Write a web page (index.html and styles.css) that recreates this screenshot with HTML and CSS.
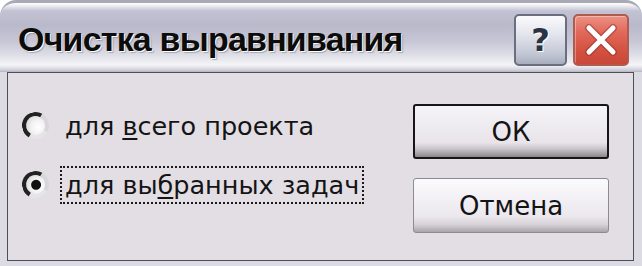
FILE: index.html
```html
<!DOCTYPE html>
<html lang="ru">
<head>
<meta charset="utf-8">
<title>Очистка выравнивания</title>
<link rel="stylesheet" href="styles.css">
</head>
<body>
<div class="window">
  <div class="titlebar">
    <span class="title">Очистка выравнивания</span>
    <div class="tbtns">
      <div class="tbtn help">?</div>
      <div class="tbtn close">
        <svg width="38" height="38" viewBox="0 0 38 38">
          <path d="M7 7 L31 31 M31 7 L7 31" stroke="#8a3228" stroke-width="8" stroke-linecap="round" opacity="0.45"/>
          <path d="M7 7 L31 31 M31 7 L7 31" stroke="#ffffff" stroke-width="5" stroke-linecap="round"/>
        </svg>
      </div>
    </div>
  </div>
  <div class="client">
    <div class="options">
      <div class="opt">
        <span class="radio"></span>
        <span class="label">для <u>в</u>сего проекта</span>
      </div>
      <div class="opt">
        <span class="radio checked"></span>
        <span class="label focus">для вы<u>б</u>ранных задач</span>
      </div>
    </div>
    <div class="buttons">
      <div class="btn default">ОК</div>
      <div class="btn">Отмена</div>
    </div>
  </div>
</div>
</body>
</html>
```
FILE: styles.css
```css
html, body {
  margin: 0;
  padding: 0;
  background: #ffffff;
}
.window {
  width: 642px;
  height: 266px;
  box-sizing: border-box;
  background: #dcdbe3;
  border-radius: 16px 16px 0 0;
  display: flex;
  flex-direction: column;
  padding-bottom: 5px;
  overflow: hidden;
}
.titlebar {
  height: 72px;
  flex: none;
  box-sizing: border-box;
  border-top: 3px solid #a9a9b6;
  border-radius: 16px 16px 0 0;
  background: linear-gradient(#ffffff 0px, #f2f2f6 2px, #c2c2d3 8px, #b9b9cb 22px, #c6c6d6 38px, #dedee7 52px, #f5f5f8 62px, #d0d0da 67px, #b4b4c2 69px);
  display: flex;
  align-items: center;
  justify-content: space-between;
  padding: 0 13px 0 18px;
}
.title {
  font-family: "Liberation Sans", Arial, sans-serif;
  font-weight: bold;
  font-size: 34px;
  letter-spacing: -0.8px;
  color: #0c0c0c;
  text-shadow: 1px 1px 0 #ffffff, 2px 2px 1px rgba(120,120,130,0.5);
  margin-top: 4px;
}
.tbtns {
  display: flex;
  gap: 6px;
  margin-top: 4px;
}
.tbtn {
  height: 52px;
  box-sizing: border-box;
  border-radius: 5px;
  display: flex;
  align-items: center;
  justify-content: center;
}
.help {
  width: 53px;
  border: 2px solid #6a6e7e;
  background: linear-gradient(#fbfbfd, #e2e4ec 40%, #c2c6d4 80%, #a8aebe);
  font-family: "DejaVu Sans", sans-serif;
  font-weight: bold;
  font-size: 32px;
  color: #2b3242;
  text-shadow: 1px 1px 0 #ffffff;
}
.close {
  width: 56px;
  border: 2px solid #b05a50;
  background: linear-gradient(#ec9284, #e0685a 35%, #d3503f 75%, #c9483a);
  box-shadow: inset 1px 1px 0 rgba(255,255,255,0.35);
}
.client {
  flex: 1;
  margin: 0 8px 0 7px;
  border: 1px solid #4e4e58;
  background: #e2dee4;
  display: flex;
  justify-content: space-between;
}
.options {
  padding: 33px 0 0 14px;
  display: flex;
  flex-direction: column;
  gap: 20px;
}
.opt {
  display: flex;
  align-items: center;
  height: 39px;
}
.radio {
  width: 27px;
  height: 27px;
  box-sizing: border-box;
  border-radius: 50%;
  border: 4px solid;
  border-color: #222222 #d8d6da #e6e4e8 #222222;
  transform: rotate(-15deg);
  background: radial-gradient(circle at 62% 62%, #ffffff 0%, #f3f3f3 40%, #cfcfd2 100%);
  display: flex;
  align-items: center;
  justify-content: center;
  margin-right: 11px;
}
.radio.checked::after {
  content: "";
  width: 10px;
  height: 10px;
  border-radius: 50%;
  background: #111111;
}
.label {
  font-family: "DejaVu Sans", sans-serif;
  font-size: 25.5px;
  color: #141414;
  padding: 0 3px;
  line-height: 34px;
  border: 2px solid transparent;
}
.label u {
  text-decoration-thickness: 2px;
  text-underline-offset: 3px;
}
.label.focus {
  border: 2px dotted #1a1a1a;
}
.buttons {
  padding: 31px 24px 0 0;
  display: flex;
  flex-direction: column;
  gap: 19px;
}
.btn {
  width: 196px;
  height: 55px;
  box-sizing: border-box;
  border: 1px solid #8e8a94;
  border-radius: 3px;
  background: linear-gradient(#fbfafc 0%, #ebe8ee 70%, #d6d2d8 86%, #a9a4ab 100%);
  font-family: "DejaVu Sans", sans-serif;
  font-size: 26px;
  color: #141414;
  display: flex;
  align-items: center;
  justify-content: center;
}
.btn.default {
  border: 2px solid #161616;
  background: linear-gradient(#f6f4f8 0%, #e8e4ea 72%, #c9c4ca 84%, #8d878c 100%);
}
```
